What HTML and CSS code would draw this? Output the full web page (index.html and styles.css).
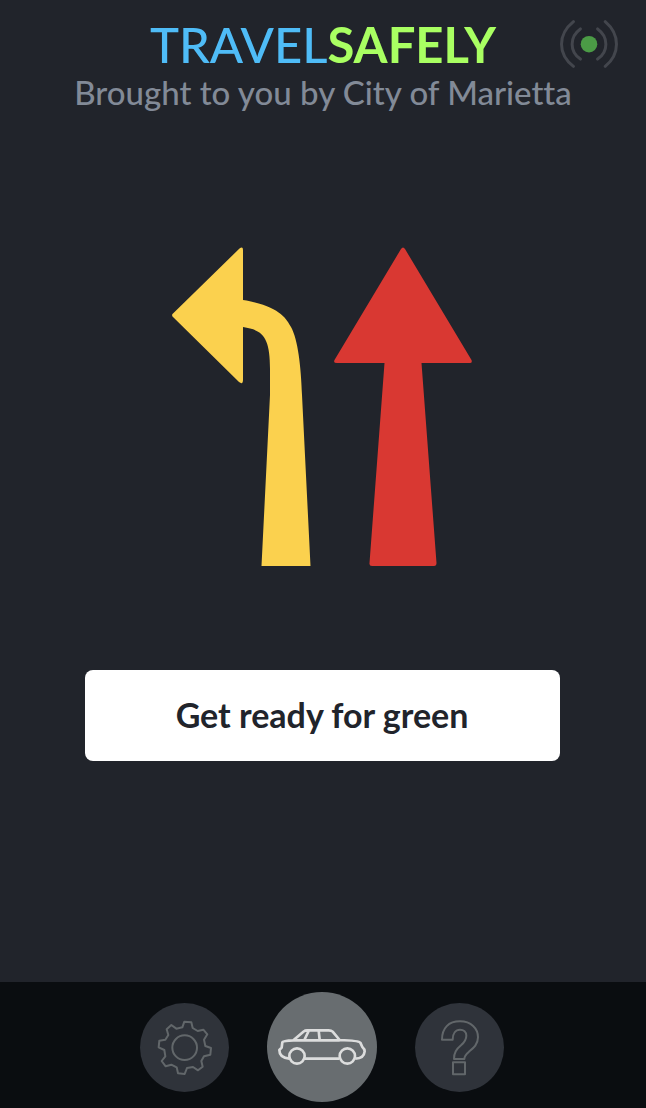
FILE: index.html
```html
<!DOCTYPE html>
<html lang="en">
<head>
<meta charset="utf-8">
<meta name="viewport" content="width=device-width, initial-scale=1">
<title>TravelSafely</title>
<link rel="stylesheet" href="styles.css">
</head>
<body>
<div class="app">
  <header class="header">
    <div class="brand-row">
      <h1 class="brand"><span class="brand-travel">TRAVEL</span><span class="brand-safely">SAFELY</span></h1>
      <svg class="signal" viewBox="720 30 174 145" role="img" aria-label="Connected">
        <circle class="signal-dot" cx="807" cy="103" r="25"/>
        <path class="signal-wave" d="M760 35Q724 64 724 103T760 170M781 57Q756 75 756 103T781 148M833 57Q858 75 858 103T833 148M856 35Q890 64 890 103T856 170"/>
      </svg>
    </div>
    <p class="sponsor">Brought to you by City of Marietta</p>
  </header>

  <main class="main">
    <svg class="lanes" viewBox="172 247 300 319" role="img" aria-label="Left turn yellow, straight red">
      <path class="lane-left" d="M172.5 314L239.500 248.500Q243 246 243 250V300C279 306 286 318 291 327C298 340 301 366 302 395L310.500 566H261.500L270 395V369C270 337 263 330 243 327V380Q243 385 239 382L173 317Q171.500 315.500 172.500 314Z"/>
      <path class="lane-ahead" d="M401 249Q403 246 405 249L471.500 360Q472.500 363 470 363H421.500L436.500 563Q436.500 566 434 566H372Q369 566 369.500 563L384.500 363H337Q333 363 334.500 360Z"/>
    </svg>
    <button class="message" type="button">Get ready for green</button>
  </main>

  <nav class="nav" aria-label="Main">
    <button class="nav-button" type="button" aria-label="Settings">
      <svg class="nav-icon" viewBox="30 97 267 267" aria-hidden="true">
        <path d="M163 153L184 155L188 172L203 181L220 177L232 191L222 207L226 226L243 232L241 252L222 257L214 271L218 288L204 299L189 289L171 292L164 310L144 308L140 290L124 282L107 287L95 271L106 257L103 238L86 230L88 210L106 207L115 193L110 176L124 163L139 174L157 170Z"/>
        <circle cx="164" cy="231" r="37"/>
      </svg>
    </button>
    <button class="nav-button nav-button-active" type="button" aria-label="Drive" aria-current="page">
      <svg class="nav-icon" viewBox="36 65 330 330" aria-hidden="true">
        <path d="M103 265C82 263 73 253 73 239L80 232L82 216Q84 211 115 210L147 183Q150 180 156 180H221Q229 180 233 184L254 209Q312 211 316 217L322 230Q329 236 329 243Q327 264 301 265M150 265H253M115 210H254M161 182L148 209M191 181L194 209"/>
        <circle cx="126" cy="257" r="23"/>
        <circle cx="277" cy="257" r="23"/>
      </svg>
    </button>
    <button class="nav-button" type="button" aria-label="Help">
      <svg class="nav-icon" viewBox="46 97 267 267" aria-hidden="true">
        <path d="M127 207C127 172 147 152 181 152C214 152 235 173 235 200C235 222 220 233 208 243C197 252 194 257 194 265H163C163 245 170 236 184 224C194 215 200 208 200 195C200 184 192 177 181 177C168 177 159 188 159 207ZM160 275H196V311H160Z"/>
      </svg>
    </button>
  </nav>
</div>
</body>
</html>
```
FILE: styles.css
```css
* {
  box-sizing: border-box;
}

body {
  margin: 0;
  background: #21242b;
  color: #21242b;
  font-family: Lato, "Open Sans", sans-serif;
  font-variant-ligatures: none;
}

.app {
  display: flex;
  flex-direction: column;
  min-height: 100vh;
}

.header {
  padding: 14px 28px 0;
}

.brand-row {
  display: grid;
  grid-template-columns: 1fr auto 1fr;
  align-items: center;
}

.brand {
  grid-column: 2;
  margin: 0;
  font-size: 49px;
  line-height: 60px;
  font-weight: 500;
}

.brand-travel {
  color: #4fbcf7;
}

.brand-safely {
  color: #a9ff62;
  font-weight: 700;
}

.signal {
  justify-self: end;
  width: 58px;
  height: 48px;
}

.signal-dot {
  fill: #4b9b46;
}

.signal-wave {
  fill: none;
  stroke: #43464d;
  stroke-width: 9;
  stroke-linecap: round;
}

.sponsor {
  margin: 0;
  color: #828a97;
  font-size: 33px;
  line-height: 36px;
  font-weight: 500;
  text-align: center;
}

.main {
  flex: 1;
  display: flex;
  flex-direction: column;
  align-items: center;
  gap: 104px;
  padding: 137px 86px 60px 84px;
}

.lanes {
  width: 300px;
  height: 319px;
}

.lane-left {
  fill: #fbd14e;
}

.lane-ahead {
  fill: #d93832;
}

.message {
  width: 100%;
  max-width: 475px;
  padding: 23px 24px 25px;
  border: 0;
  border-radius: 8px;
  background: #fff;
  color: #21242b;
  font: inherit;
  font-size: 34px;
  line-height: 43px;
  font-weight: 700;
}

.nav {
  display: flex;
  justify-content: center;
  align-items: center;
  gap: 38px;
  padding: 10px 2px 6px 0;
  background: #0a0d10;
}

.nav-button {
  width: 89px;
  height: 89px;
  padding: 0;
  border: 0;
  border-radius: 50%;
  background: #2f333a;
  color: #62676a;
}

.nav-button-active {
  width: 110px;
  height: 110px;
  background: #686d70;
  color: #dcdddd;
}

.nav-icon {
  display: block;
  width: 100%;
  height: 100%;
  fill: none;
  stroke: currentColor;
  stroke-width: 6;
  stroke-linejoin: round;
}

.nav-button-active .nav-icon {
  stroke-width: 8;
}
```
